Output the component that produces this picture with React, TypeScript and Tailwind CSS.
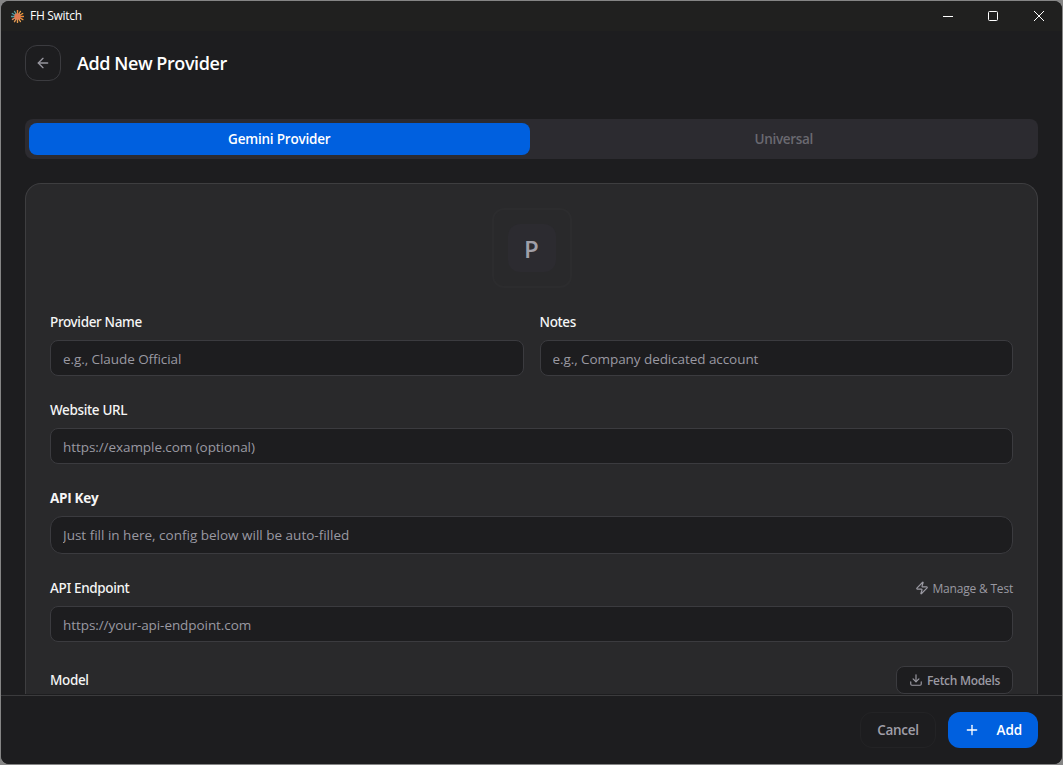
import { ArrowLeft, Download, Plus, Zap } from 'lucide-react';

const RAYS = [
    { angle: 0, length: 6.2, color: '#e98a3c' },
    { angle: 30, length: 5.8, color: '#e3a24c' },
    { angle: 60, length: 6, color: '#ee9a3a' },
    { angle: 90, length: 6, color: '#ee8a3a' },
    { angle: 120, length: 6.2, color: '#e8913f' },
    { angle: 150, length: 5.8, color: '#e8a14e' },
    { angle: 180, length: 6, color: '#e2994b' },
    { angle: 210, length: 6, color: '#dd9656' },
    { angle: 240, length: 5.8, color: '#d88a5e' },
    { angle: 270, length: 6.2, color: '#4f9ba3' },
    { angle: 300, length: 6, color: '#4798a6' },
    { angle: 330, length: 5.8, color: '#5f9f98' },
];

const AppLogo = () => (
    <svg width="13" height="13" viewBox="-6.5 -6.5 13 13">
        {RAYS.map((ray) => (
            <line
                key={ray.angle}
                x1="0"
                y1="0"
                x2="0"
                y2={-ray.length}
                stroke={ray.color}
                strokeWidth="1.4"
                strokeLinecap="round"
                transform={`rotate(${ray.angle})`}
            />
        ))}
        <circle r="3.2" fill="#e07b52" />
    </svg>
);

const TitleBar = () => (
    <header className="flex h-[30px] shrink-0 items-center justify-between bg-[#20201f] pl-[10px] pr-[17px]">
        <div className="flex items-center gap-[6px]">
            <AppLogo />
            <span className="text-[12px] leading-4 tracking-[-0.3px] text-white">FH Switch</span>
        </div>
        <svg width="102" height="12" viewBox="0 0 102 12" fill="none" stroke="#ffffff">
            <path d="M0 6.5h10" />
            <rect x="45.5" y="1.5" width="9" height="9" rx="1" />
            <path d="M91 1l10 10M101 1l-10 10" />
        </svg>
    </header>
);

type FieldProps = {
    label: string;
    placeholder: string;
    labelClass?: string;
    inputClass?: string;
    action?: React.ReactNode;
};

const Field = ({
    label,
    placeholder,
    labelClass = "font-medium tracking-[-0.35px] font-['Noto_Sans',sans-serif]",
    inputClass = 'h-9 rounded-lg pt-0.5 tracking-[-0.07px]',
    action,
}: FieldProps) => (
    <div className="flex flex-col gap-2">
        <div className="flex h-5 items-center justify-between">
            <label className={`text-[13.5px] leading-5 text-[#f5f5f5] ${labelClass}`}>{label}</label>
            {action}
        </div>
        <input
            placeholder={placeholder}
            className={`w-full border border-[#3b3b3f] bg-[#1d1d1f] px-3 text-[13.5px] text-white outline-none placeholder:text-[#9a99a2] ${inputClass}`}
        />
    </div>
);

const ProviderForm = () => (
    <section className="flex flex-col gap-6 rounded-t-2xl border border-b-0 border-[#3e3e40] bg-[#29292b] px-6 pt-6">
        <div className="flex justify-center">
            <div className="flex h-20 w-20 items-center justify-center rounded-xl border-2 border-[#2c2c2e]">
                <div className="flex h-12 w-12 items-center justify-center rounded-xl bg-[#2c2b30]">
                    <span className="pt-0.5 text-[24px] font-semibold leading-none text-[#a09fa8]">P</span>
                </div>
            </div>
        </div>

        <div className="grid grid-cols-2 gap-4">
            <Field label="Provider Name" placeholder="e.g., Claude Official" />
            <Field label="Notes" placeholder="e.g., Company dedicated account" />
        </div>

        <Field label="Website URL" placeholder="https://example.com (optional)" />

        <Field
            label="API Key"
            placeholder="Just fill in here, config below will be auto-filled"
            labelClass="font-bold tracking-[-0.3px]"
            inputClass="h-[38px] rounded-xl tracking-[0px]"
        />

        <Field
            label="API Endpoint"
            placeholder="https://your-api-endpoint.com"
            action={
                <button className="flex items-center gap-1 text-[12px] leading-4 tracking-[-0.2px] text-[#9a99a2]">
                    <Zap className="h-3.5 w-3.5" />
                    <span className="pt-0.5">Manage &amp; Test</span>
                </button>
            }
        />

        <div className="flex h-7 items-center justify-between">
            <label className="font-['Noto_Sans',sans-serif] text-[13.5px] font-medium leading-5 tracking-[-0.35px] text-[#f5f5f5]">
                Model
            </label>
            <button className="flex h-7 w-[117px] items-center justify-center gap-1 whitespace-nowrap rounded-lg border border-[#3b3b3f] bg-[#1d1d1f] text-[12px] font-semibold tracking-[-0.3px] text-[#9a99a2]">
                <Download className="h-3.5 w-3.5" />
                <span className="pt-0.5">Fetch Models</span>
            </button>
        </div>
    </section>
);

const App = () => {
    return (
        <div className="h-[765px] w-[1063px] overflow-hidden bg-[#858585] p-px font-['Open_Sans','Noto_Sans',sans-serif]">
            <div className="flex h-full flex-col overflow-hidden rounded-lg bg-[#1d1d1f]">
                <TitleBar />

                <main className="flex min-h-0 flex-1 flex-col overflow-hidden px-6 pt-[14px]">
                    <div className="flex shrink-0 items-center gap-4">
                        <button className="flex h-9 w-9 items-center justify-center rounded-xl border border-[#3b3b3f] text-[#97969f]">
                            <ArrowLeft className="h-4 w-4" />
                        </button>
                        <h1 className="text-[18px] font-semibold leading-7 tracking-[-0.43px] text-white">Add New Provider</h1>
                    </div>

                    <div className="mt-[38px] grid h-10 shrink-0 grid-cols-2 gap-1 rounded-lg bg-[#2c2b30] p-1 text-[13.5px] font-semibold">
                        <button className="rounded-lg bg-[#0060df] tracking-[-0.2px] text-white">Gemini Provider</button>
                        <button className="rounded-lg tracking-[-0.3px] text-[#6a6970]">Universal</button>
                    </div>

                    <div className="mt-6">
                        <ProviderForm />
                    </div>
                </main>

                <footer className="flex h-[69px] shrink-0 items-center justify-end gap-3 border-t border-[#3b3b3d] bg-[#1d1d1f] px-6">
                    <button className="h-9 w-[76px] rounded-xl border border-[#232325] text-[13.5px] font-semibold tracking-[-0.3px] text-[#a09fa8]">
                        Cancel
                    </button>
                    <button className="flex h-9 w-[90px] items-center justify-between rounded-xl bg-[#0060df] px-4 text-[13.5px] font-semibold tracking-[-0.1px] text-white">
                        <Plus className="h-4 w-4" />
                        Add
                    </button>
                </footer>
            </div>
        </div>
    );
};

export default App;
